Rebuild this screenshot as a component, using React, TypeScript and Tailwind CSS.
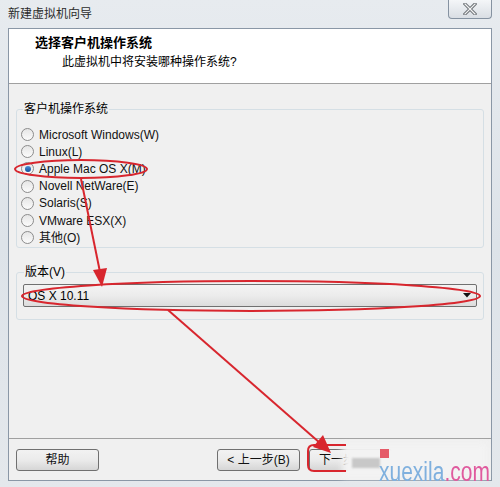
import React from "react";

const FONT = { fontFamily: '"Liberation Sans", "Noto Sans CJK SC", sans-serif' };

const osList = [
  "Microsoft Windows(W)",
  "Linux(L)",
  "Apple Mac OS X(M)",
  "Novell NetWare(E)",
  "Solaris(S)",
  "VMware ESX(X)",
  "其他(O)",
];

function Radio({ checked }: { checked?: boolean }) {
  return (
    <span className="w-[13px] h-[13px] rounded-full border border-[#8c8c8c] bg-gradient-to-b from-[#e6e6e6] to-[#fbfbfb] flex items-center justify-center shrink-0">
      {checked && (
        <span className="w-[6px] h-[6px] rounded-full bg-gradient-to-b from-[#4b8fd6] to-[#0f4f9a]" />
      )}
    </span>
  );
}

function WinButton({ label, className }: { label: string; className?: string }) {
  return (
    <button
      className={`h-[22px] rounded-[3px] border border-[#707070] bg-gradient-to-b from-[#f2f2f2] via-[#ebebeb] to-[#d6d6d6] text-[12px] text-[#111] flex items-center justify-center ${className ?? ""}`}
    >
      {label}
    </button>
  );
}

export default function App() {
  return (
    <div
      className="relative w-[500px] h-[487px] overflow-hidden bg-gradient-to-b from-[#e7ebef] via-[#dde3e9] to-[#e4e8ec] flex flex-col"
      style={FONT}
    >
      {/* title bar */}
      <div className="h-[28px] flex justify-between items-start">
        <span className="pl-[8px] pt-[6px] text-[12px] leading-[16px] text-[#2b2b2b]">新建虚拟机向导</span>
        <div className="mr-[8px] w-[44px] h-[19px] rounded-b-[4px] border border-t-0 border-[#8592a1] bg-gradient-to-b from-[#f4f6f8] to-[#d9dee4] flex items-center justify-center">
          <svg width="14" height="12" viewBox="0 0 14 12">
            <path d="M2 1 L12 11 M12 1 L2 11" stroke="#6e7378" strokeWidth="3.2" strokeLinecap="square" />
            <path d="M2 1 L12 11 M12 1 L2 11" stroke="#f4f4f4" strokeWidth="1.2" strokeLinecap="square" />
          </svg>
        </div>
      </div>

      {/* inner frame */}
      <div className="mx-[8px] h-[453px] border border-[#8a97a6] flex flex-col bg-[#f0f0f0]">
        <div className="h-[55px] bg-white border-b border-[#a0a0a0] flex flex-col">
          <span className="pl-[26px] pt-[6px] text-[13px] leading-[16px] font-bold text-black">选择客户机操作系统</span>
          <span className="pl-[53px] pt-[3px] text-[12px] leading-[16px] text-black">此虚拟机中将安装哪种操作系统?</span>
        </div>

        <div className="flex-1 px-[7px] pt-[17px] flex flex-col">
          <fieldset className="border border-[#d5dfe5] rounded-[3px] pl-[4px] pr-[4px] pb-[1px]">
            <legend className="ml-[2px] px-[1px] text-[12px] leading-[16px] text-black">客户机操作系统</legend>
            <div className="pt-[9px] flex flex-col">
              {osList.map((os, i) => (
                <label key={i} className="h-[17.2px] flex items-center gap-[5px] text-[12px] text-[#111]">
                  <Radio checked={i === 2} />
                  <span>{os}</span>
                </label>
              ))}
            </div>
          </fieldset>

          <fieldset className="mt-[16px] border border-[#d5dfe5] rounded-[3px] px-[6px] pb-[12px]">
            <legend className="ml-[1px] px-[1px] text-[12px] leading-[16px] text-black">版本(V)</legend>
            <div className="mt-[4px] h-[23px] rounded-[2px] border border-[#707070] bg-gradient-to-b from-[#f3f3f3] via-[#ececec] to-[#dcdcdc] flex items-center justify-between pl-[4px] pr-[5px]">
              <span className="text-[12px] text-black">OS X 10.11</span>
              <svg width="8" height="5" viewBox="0 0 8 5">
                <path d="M0 0 L8 0 L4 4.5 Z" fill="#111" />
              </svg>
            </div>
          </fieldset>

          <div className="flex-1" />
        </div>

        <div className="h-[42px] border-t border-[#a0a0a0] flex items-center px-[7px]">
          <WinButton label="帮助" className="w-[83px]" />
          <div className="flex-1" />
          <WinButton label="< 上一步(B)" className="w-[83px]" />
          <WinButton label="下一步(N) >" className="w-[83px] ml-[9px] mr-[92px]" />
        </div>
      </div>

      {/* watermark blur */}
      <div className="absolute left-[342px] top-[444px] w-[144px] h-[34px] bg-[#f3f3f3] blur-[3px]" />
      <div className="absolute left-[352px] top-[458px] w-[28px] h-[10px] bg-[#c8c8c8] blur-[1px]" />
      <div className="absolute left-[380px] top-[449px] w-[9px] h-[9px] bg-[#e55a68]" />
      <div
        className="absolute left-[379px] top-[464px] h-[21px] text-[21px] leading-[21px] whitespace-nowrap scale-y-[1.3] origin-bottom"
        style={{ fontFamily: '"Liberation Sans", sans-serif' }}
      >
        <span className="text-[#7fb0de]">xuexila</span>
        <span className="text-[#e05a9e]">.com</span>
      </div>

      {/* red annotations */}
      <svg className="absolute inset-0 pointer-events-none" width="500" height="487" viewBox="0 0 500 487">
        <g stroke="#d8262e" strokeWidth="2" fill="none">
          <ellipse cx="81" cy="169" rx="66" ry="9" />
          <ellipse cx="251" cy="296" rx="229" ry="15" />
          <path d="M81 179 L100 272" />
          <path d="M168 310 L320 443" />
          <path d="M346 445 L314 445 Q308 445 308 451 L308 465 Q308 471 314 471 L346 471" />
        </g>
        <polygon points="102,287 93,270 107,268" fill="#d8262e" />
        <polygon points="331,453 313,447 323,435" fill="#d8262e" />
      </svg>
    </div>
  );
}
